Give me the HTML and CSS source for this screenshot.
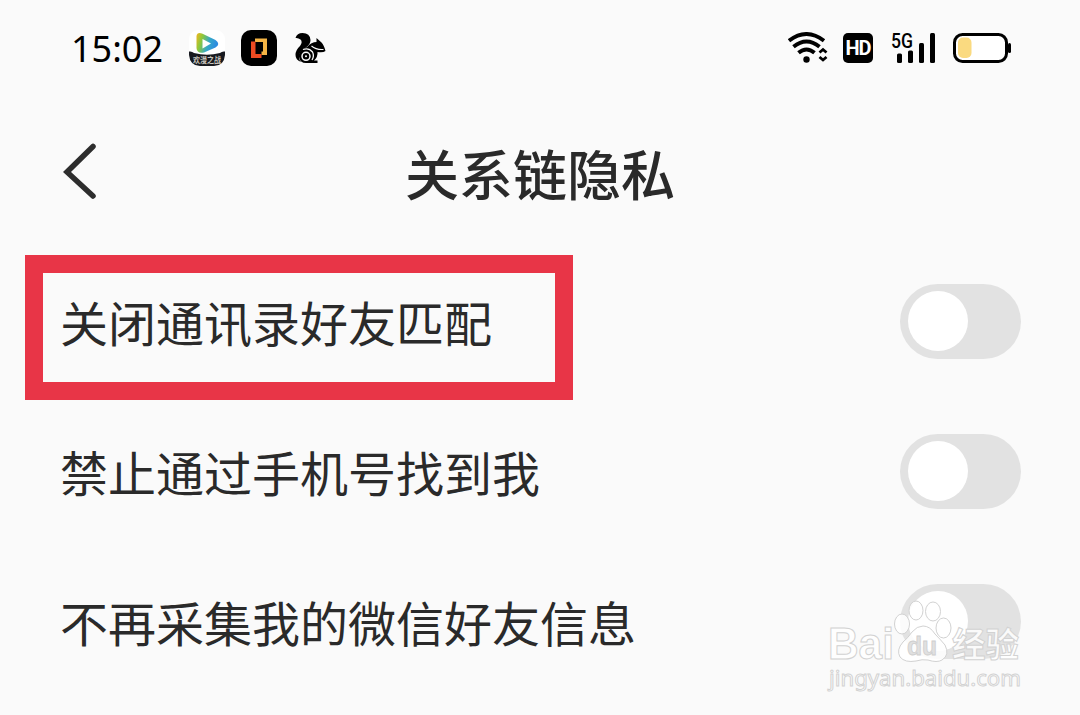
FILE: index.html
```html
<!DOCTYPE html>
<html lang="zh-CN">
<head>
    <meta charset="UTF-8">
    <meta name="viewport" content="width=device-width, initial-scale=1.0">
    <title>关系链隐私</title>
    <link rel="stylesheet" href="styles.css">
</head>
<body>

    <!-- STATUS BAR -->
    <div class="status-bar">
        <span class="time">15:02</span>
        <div class="app-icons">
            <svg width="38" height="38" viewBox="0 0 38 38">
                <defs>
                    <linearGradient id="play" x1="0" y1="0" x2="1" y2="0.3">
                        <stop offset="0" stop-color="#f5b51e"/>
                        <stop offset="0.3" stop-color="#8cc83c"/>
                        <stop offset="0.65" stop-color="#35a8c8"/>
                        <stop offset="1" stop-color="#2b8be0"/>
                    </linearGradient>
                </defs>
                <rect x="1" y="1" width="36" height="36" rx="9" fill="#fff"/>
                <path d="M8.500 7 Q9 3 14 4.500 L27.500 11 Q33 15 27.500 18.500 L16 23.500 Q9 25 8.500 19 Z" fill="url(#play)"/>
                <path d="M14.500 10 L23 14.500 L14.500 19.500 Z" fill="#fff"/>
                <path d="M1 22.500 Q4 22 6 24 Q19 27.500 32 24 Q34 22 37 22.500 V26 Q36 37 26 37 H12 Q2 37 1 26 Z" fill="#17191f"/>
                <text class="app-name" x="5" y="34" textLength="28" lengthAdjust="spacingAndGlyphs">欢漫之战</text>
            </svg>
            <svg width="36" height="36" viewBox="0 0 36 36">
                <rect width="36" height="36" rx="10" fill="#000"/>
                <path d="M14 8.500 H26 V25 H20.500 V21.500 H22 V12 H14 Z" fill="#f6b545"/>
                <path d="M10 11.500 H14.500 V24 H20.500 V28 H10 Z" fill="#ee4b22"/>
            </svg>
            <svg class="squirrel" width="32" height="32" viewBox="0 0 32 32">
                <path d="M1.500 6 Q3 1 8.500 1 Q16 1 16.500 8 Q16.500 12 12 15.500 Q5 19 5 25 Q5 28 7 30 Q1.500 28 1.500 23 Q1.500 18 6 14 Q9 10 6.500 7.500 Q4 5.500 1.500 6 Z" fill="#000"/>
                <path d="M5 25 Q4 18 13 15 Q17.500 10 22.500 10 V6 L27.500 10.500 Q30 13 31.500 19 Q29 21 23.500 20 Q24 25 20 28.500 H23.500 V31 H12 Q6 31 5 25 Z" fill="#000"/>
                <path d="M9 17.500 Q15 15.500 18.500 20 Q20.500 24 18 28" fill="none" stroke="#fafafa" stroke-width="1.300"/>
                <circle cx="12" cy="24.300" r="4" fill="#000" stroke="#fafafa" stroke-width="1.500"/>
                <circle cx="12" cy="24.300" r="1" fill="#fafafa"/>
                <path d="M17.500 14 Q22 18 29.500 17.500" fill="none" stroke="#fafafa" stroke-width="1.100"/>
            </svg>
        </div>

        <div class="system-icons">
            <svg width="40" height="32" viewBox="0 0 40 32">
                <g fill="none" stroke="#000" stroke-width="3.900">
                    <path d="M1 8.800 Q18.500 -4.800 36 8.800"/>
                    <path d="M5.500 14.800 Q18.500 4.200 31.500 14.800"/>
                    <path d="M10.500 20.800 Q18.500 14 26.500 20.800"/>
                    <path d="M31.500 20.500 L35 17.500 L38.500 20.500 M31.500 25 L35 28 L38.500 25" stroke-width="2.800"/>
                </g>
                <circle cx="18.500" cy="27.500" r="3.200"/>
            </svg>
            <span class="hd">HD</span>
            <svg class="signal" width="45" height="36" viewBox="-1 -4 45 36">
                <text class="network" x="-1" y="16" textLength="22" lengthAdjust="spacingAndGlyphs">5G</text>
                <rect x="5" y="21.500" width="5" height="9.500" rx="1.500"/>
                <rect x="16" y="18.500" width="5" height="12.500" rx="1.500"/>
                <rect x="27" y="11" width="5" height="20" rx="1.500"/>
                <rect x="38" y="1" width="5" height="30" rx="1.500"/>
            </svg>
            <svg class="battery" width="58" height="32" viewBox="0 0 58 32">
                <rect x="1.500" y="2.500" width="52" height="27" rx="8" fill="#fff" stroke="#000" stroke-width="3"/>
                <rect x="5" y="5.500" width="13.500" height="20.500" rx="5" fill="#fada80"/>
                <rect x="55" y="11" width="3" height="10" rx="1.500"/>
            </svg>
        </div>
    </div>

    <!-- TITLE -->
    <header>
        <a href="#" class="back">
            <svg width="36" height="60" viewBox="0 0 36 60">
                <path d="M31 5.500 L5 31 L31 55" fill="none" stroke="#2d2d2d" stroke-width="5.500" stroke-linecap="round"/>
            </svg>
        </a>
        <h1>关系链隐私</h1>
    </header>

    <!-- SETTINGS -->
    <main class="settings">
        <div class="row highlight">
            <span class="label">关闭通讯录好友匹配</span>
            <span class="switch"></span>
        </div>
        <div class="row">
            <span class="label">禁止通过手机号找到我</span>
            <span class="switch"></span>
        </div>
        <div class="row">
            <span class="label">不再采集我的微信好友信息</span>
            <span class="switch"></span>
        </div>
    </main>

    <!-- watermark over the last switch -->
    <svg class="watermark" width="210" height="105" viewBox="0 0 210 105">
        <g class="mark">
            <text class="mark-bai" x="3" y="63" textLength="66" lengthAdjust="spacingAndGlyphs">Bai</text>
            <ellipse cx="77" cy="28" rx="7.500" ry="10"/>
            <ellipse cx="91" cy="14.500" rx="7" ry="9.500"/>
            <ellipse cx="108" cy="15.500" rx="7.500" ry="9.500"/>
            <ellipse cx="118.500" cy="32" rx="7.500" ry="10"/>
            <path d="M98 30 Q105 30 110 38 Q115 43 120 49 Q125 59 117 64 Q112 67 103 64 Q97 63 91 65 Q80 67 75 61 Q71 54 78 46 Q83 42 87 36 Q92 30 98 30 Z"/>
            <text class="mark-cn" x="127" y="61" textLength="67" lengthAdjust="spacingAndGlyphs">经验</text>
            <text class="mark-url" x="4" y="90" textLength="192" lengthAdjust="spacingAndGlyphs">jingyan.baidu.com</text>
        </g>
        <text class="mark-du" x="82" y="59" textLength="30" lengthAdjust="spacingAndGlyphs">du</text>
    </svg>

</body>
</html>
```
FILE: styles.css
```css
body
{
    margin: 0;
    height: 715px;
    overflow: hidden;
    position: relative;
    background-color: #fafafa;
    color: #2a2a2a;
    font-family: 'Noto Sans', 'Noto Sans CJK SC', sans-serif;
}

/* status bar */
.status-bar
{
    display: flex;
    align-items: center;
    height: 96px;
    padding: 0 69px 0 71px;
    color: #000;
}
.time
{
    width: 117px;
    padding-top: 1px;
    font-size: 36px;
    line-height: 48px;
}
.app-icons
{
    display: flex;
    align-items: center;
    gap: 15px;
}
.squirrel
{
    margin-left: 2px;
}
.app-name
{
    font-size: 8px;
    font-weight: bold;
    fill: #c9c5bd;
}
.system-icons
{
    display: flex;
    align-items: center;
    margin-left: auto;
}
.hd
{
    width: 30px;
    height: 30px;
    margin: 0 18px 0 15px;
    border-radius: 5px;
    background-color: #000;
    color: #fff;
    font-family: Roboto, sans-serif;
    font-size: 20px;
    font-weight: bold;
    line-height: 31px;
    text-align: center;
    letter-spacing: -1px;
}
.signal
{
    margin-bottom: 4px;
}
.network
{
    font-family: Roboto, sans-serif;
    font-size: 20px;
    font-weight: 500;
}
.battery
{
    margin-left: 17px;
}

/* title */
header
{
    display: grid;
    grid-template-columns: 120px 1fr 120px;
    align-items: center;
    height: 150px;
}
.back
{
    height: 60px;
    padding-left: 62px;
}
h1
{
    margin: 0;
    padding-top: 7px;
    font-size: 54px;
    font-weight: 500;
    line-height: 80px;
    text-align: center;
}

/* settings list */
.row
{
    display: flex;
    justify-content: space-between;
    align-items: center;
    height: 150px;
    padding: 0 59px 0 60px;
    position: relative;
}
.label
{
    padding-top: 5px;
    font-size: 48px;
    line-height: 70px;
}
.highlight::before
{
    content: "";
    position: absolute;
    left: 25px;
    top: 9px;
    width: 512px;
    height: 109px;
    border: 18px solid #e83547;
}
.switch
{
    display: flex;
    align-items: center;
    width: 113px;
    height: 75px;
    padding-left: 8px;
    border-radius: 38px;
    background-color: #e2e2e2;
}
.switch::before
{
    content: "";
    width: 60px;
    height: 60px;
    border-radius: 50%;
    background-color: #fff;
}

/* watermark */
.watermark
{
    position: absolute;
    left: 825px;
    top: 596px;
}
.mark
{
    fill: #fff;
    fill-opacity: 0.85;
    stroke: #d2d2d2;
    stroke-width: 1;
}
.mark-bai
{
    font-family: 'Liberation Sans', sans-serif;
    font-size: 44px;
    font-weight: bold;
}
.mark-cn
{
    font-size: 34px;
    font-weight: bold;
}
.mark-url
{
    font-family: 'Noto Sans', sans-serif;
    font-size: 22px;
}
.mark-du
{
    font-family: 'Liberation Sans', sans-serif;
    font-size: 25px;
    font-weight: bold;
    fill: #e0e0e0;
    stroke: #cfcfcf;
    stroke-width: 0.8;
}
```
